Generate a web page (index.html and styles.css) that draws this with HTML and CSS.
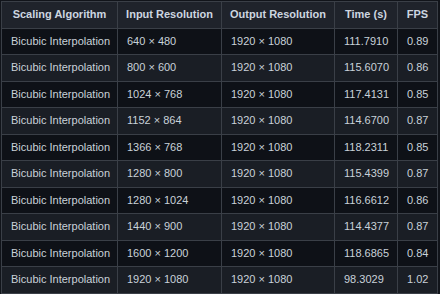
FILE: index.html
```html
<!DOCTYPE html>
<html>
<head>
<meta charset="utf-8">
<link rel="stylesheet" href="styles.css">
</head>
<body>
<table class="grid">
<colgroup>
<col class="c1"><col class="c2"><col class="c3"><col class="c4"><col class="c5">
</colgroup>
<thead>
<tr><th>Scaling Algorithm</th><th>Input Resolution</th><th>Output Resolution</th><th>Time (s)</th><th>FPS</th></tr>
</thead>
<tbody>
<tr><td>Bicubic Interpolation</td><td>640 × 480</td><td>1920 × 1080</td><td>111.7910</td><td>0.89</td></tr>
<tr><td>Bicubic Interpolation</td><td>800 × 600</td><td>1920 × 1080</td><td>115.6070</td><td>0.86</td></tr>
<tr><td>Bicubic Interpolation</td><td>1024 × 768</td><td>1920 × 1080</td><td>117.4131</td><td>0.85</td></tr>
<tr><td>Bicubic Interpolation</td><td>1152 × 864</td><td>1920 × 1080</td><td>114.6700</td><td>0.87</td></tr>
<tr><td>Bicubic Interpolation</td><td>1366 × 768</td><td>1920 × 1080</td><td>118.2311</td><td>0.85</td></tr>
<tr><td>Bicubic Interpolation</td><td>1280 × 800</td><td>1920 × 1080</td><td>115.4399</td><td>0.87</td></tr>
<tr><td>Bicubic Interpolation</td><td>1280 × 1024</td><td>1920 × 1080</td><td>116.6612</td><td>0.86</td></tr>
<tr><td>Bicubic Interpolation</td><td>1440 × 900</td><td>1920 × 1080</td><td>114.4377</td><td>0.87</td></tr>
<tr><td>Bicubic Interpolation</td><td>1600 × 1200</td><td>1920 × 1080</td><td>118.6865</td><td>0.84</td></tr>
<tr><td>Bicubic Interpolation</td><td>1920 × 1080</td><td>1920 × 1080</td><td>98.3029</td><td>1.02</td></tr>
</tbody>
</table>
</body>
</html>
```
FILE: styles.css
```css
html, body {
  margin: 0;
  padding: 0;
}
body {
  background: #11141a;
  padding: 1px 0 0 1px;
  font-family: "Liberation Sans", Arial, sans-serif;
  font-size: 11px;
  color: #c9d1d9;
}
.grid {
  border-collapse: collapse;
  table-layout: fixed;
  width: 436px;
}
.c1 { width: 116px; }
.c2 { width: 104px; }
.c3 { width: 113px; }
.c4 { width: 63px; }
.c5 { width: 40px; }
.grid th, .grid td {
  border: 1px solid #3a3f47;
  padding: 6px 8px 6px 9px;
  line-height: 13.5px;
  white-space: nowrap;
  text-align: left;
}
.grid th {
  background: #1f232b;
  font-weight: bold;
  text-align: center;
  color: #cdd6e0;
  padding-left: 4px;
  padding-right: 4px;
}
.grid tbody tr:nth-child(odd) td {
  background: #0e1117;
}
.grid tbody tr:nth-child(even) td {
  background: #1a1e25;
}
```
